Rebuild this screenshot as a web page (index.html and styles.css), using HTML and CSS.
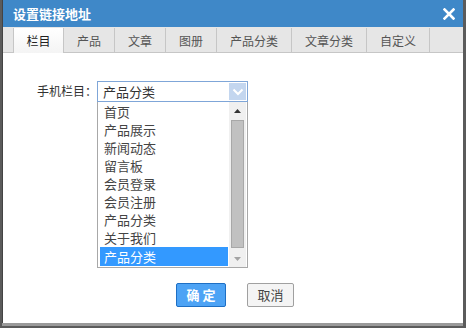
FILE: index.html
```html
<!DOCTYPE html>
<html lang="zh">
<head>
<meta charset="utf-8">
<link rel="stylesheet" href="styles.css">
</head>
<body>
<div class="dialog">
  <div class="titlebar">
    <span class="title">设置链接地址</span>
    <span class="close">
      <svg width="12" height="12" viewBox="0 0 12 12"><path d="M1.5 1.5 L10.5 10.5 M10.5 1.5 L1.5 10.5" stroke="#fff" stroke-width="2.6" stroke-linecap="square"/></svg>
    </span>
  </div>
  <div class="tabs">
    <div class="tab active w50">栏目</div>
    <div class="tab w51">产品</div>
    <div class="tab w51">文章</div>
    <div class="tab w51">图册</div>
    <div class="tab w75">产品分类</div>
    <div class="tab w75">文章分类</div>
    <div class="tab w63">自定义</div>
  </div>
  <div class="content">
    <div class="row">
      <span class="label">手机栏目：</span>
      <div class="selectwrap">
        <div class="select">
          <span class="value">产品分类</span>
          <span class="arrow">
            <svg width="12" height="8" viewBox="0 0 12 8"><path d="M1.5 1.5 L6 6 L10.5 1.5" fill="none" stroke="#fff" stroke-width="2"/></svg>
          </span>
        </div>
        <div class="list">
          <div class="items">
            <div class="item">首页</div>
            <div class="item">产品展示</div>
            <div class="item">新闻动态</div>
            <div class="item">留言板</div>
            <div class="item">会员登录</div>
            <div class="item">会员注册</div>
            <div class="item">产品分类</div>
            <div class="item">关于我们</div>
            <div class="item selected">产品分类</div>
          </div>
          <div class="scrollbar">
            <div class="sbtn"><svg width="7" height="4" viewBox="0 0 7 4"><path d="M0 4 L3.5 0 L7 4 Z" fill="#333"/></svg></div>
            <div class="thumb"></div>
            <div class="sbtn"><svg width="7" height="4" viewBox="0 0 7 4"><path d="M0 0 L3.5 4 L7 0 Z" fill="#a3a3a3"/></svg></div>
          </div>
        </div>
      </div>
    </div>
    <div class="buttons">
      <button class="btn ok">确 定</button>
      <button class="btn cancel">取消</button>
    </div>
  </div>
</div>
</body>
</html>
```
FILE: styles.css
```css
html, body {
  margin: 0;
  padding: 0;
}
body {
  width: 466px;
  height: 328px;
  background: #5b5b5b;
  font-family: "Noto Sans CJK SC", "Noto Sans", sans-serif;
  font-size: 13px;
  color: #333;
  overflow: hidden;
}
.dialog {
  margin-left: 2px;
  width: 461px;
  height: 323px;
  background: #fff;
  display: flex;
  flex-direction: column;
  box-shadow: 0 3px 0 #9a9a9a;
  border-left: 1px solid #444;
  box-sizing: border-box;
}
.titlebar {
  height: 27px;
  background: #3f88c8;
  display: flex;
  align-items: center;
  justify-content: space-between;
  padding: 0 8px 0 10px;
}
.title {
  color: #fff;
  font-weight: bold;
  font-size: 13px;
  line-height: 1;
}
.close {
  display: flex;
}
.tabs {
  height: 26px;
  box-sizing: border-box;
  background: #e6e6e6;
  border-bottom: 1px solid #c6c6c6;
  padding: 1px 0 0 10px;
  display: flex;
}
.tab {
  height: 24px;
  box-sizing: border-box;
  border-right: 1px solid #c6c6c6;
  display: flex;
  align-items: center;
  justify-content: center;
  color: #555;
  font-size: 12px;
}
.tab.active {
  border-left: 1px solid #c6c6c6;
  background: linear-gradient(#fff, #f4f4f4);
  height: 25px;
  color: #222;
}
.w50 { width: 51px; }
.w51 { width: 51px; }
.w75 { width: 75px; }
.w63 { width: 63px; }
.content {
  flex: 1;
  display: flex;
  flex-direction: column;
  padding: 28px 0 0 0;
}
.row {
  display: flex;
  align-items: flex-start;
  padding-left: 34px;
}
.label {
  line-height: 20px;
  font-size: 12px;
  color: #333;
}
.selectwrap {
  width: 151px;
  display: flex;
  flex-direction: column;
}
.select {
  height: 21px;
  box-sizing: border-box;
  border: 1px solid #7fa6d8;
  display: flex;
  align-items: center;
  justify-content: space-between;
  padding: 0 1px 0 5px;
}
.value {
  line-height: 1;
  color: #333;
}
.arrow {
  width: 17px;
  height: 17px;
  background: #c3d6ef;
  display: flex;
  align-items: center;
  justify-content: center;
}
.list {
  height: 166px;
  box-sizing: border-box;
  border: 1px solid #a8a8a8;
  border-top: none;
  display: flex;
  padding: 1px 1px 1px 2px;
}
.items {
  flex: 1;
  display: flex;
  flex-direction: column;
}
.item {
  height: 18px;
  line-height: 18px;
  padding-left: 4px;
  color: #444;
}
.item.selected {
  background: #3399ff;
  color: #fff;
  height: 19px;
  line-height: 19px;
}
.scrollbar {
  width: 17px;
  margin-left: 1px;
  background: #f0f0f0;
  display: flex;
  flex-direction: column;
  margin-top: -1px;
  margin-bottom: -1px;
}
.sbtn {
  height: 17px;
  display: flex;
  align-items: center;
  justify-content: center;
}
.thumb {
  flex: 1;
  margin: 1px 2px 2px 2px;
  background: #c1c1c1;
  border: 1px solid #a8a8a8;
}
.buttons {
  display: flex;
  justify-content: center;
  gap: 21px;
  margin-top: 15px;
  padding-left: 4px;
}
.btn {
  height: 24px;
  font-family: "Noto Sans CJK SC", sans-serif;
  font-size: 13px;
  border-radius: 2px;
  padding: 0;
  line-height: 20px;
}
.ok {
  width: 50px;
  background: #4da3f5;
  border: 1px solid #1e6fc4;
  color: #fff;
  font-weight: bold;
}
.cancel {
  width: 47px;
  background: #f4f4f4;
  border: 1px solid #a0a0a0;
  color: #444;
}
```
